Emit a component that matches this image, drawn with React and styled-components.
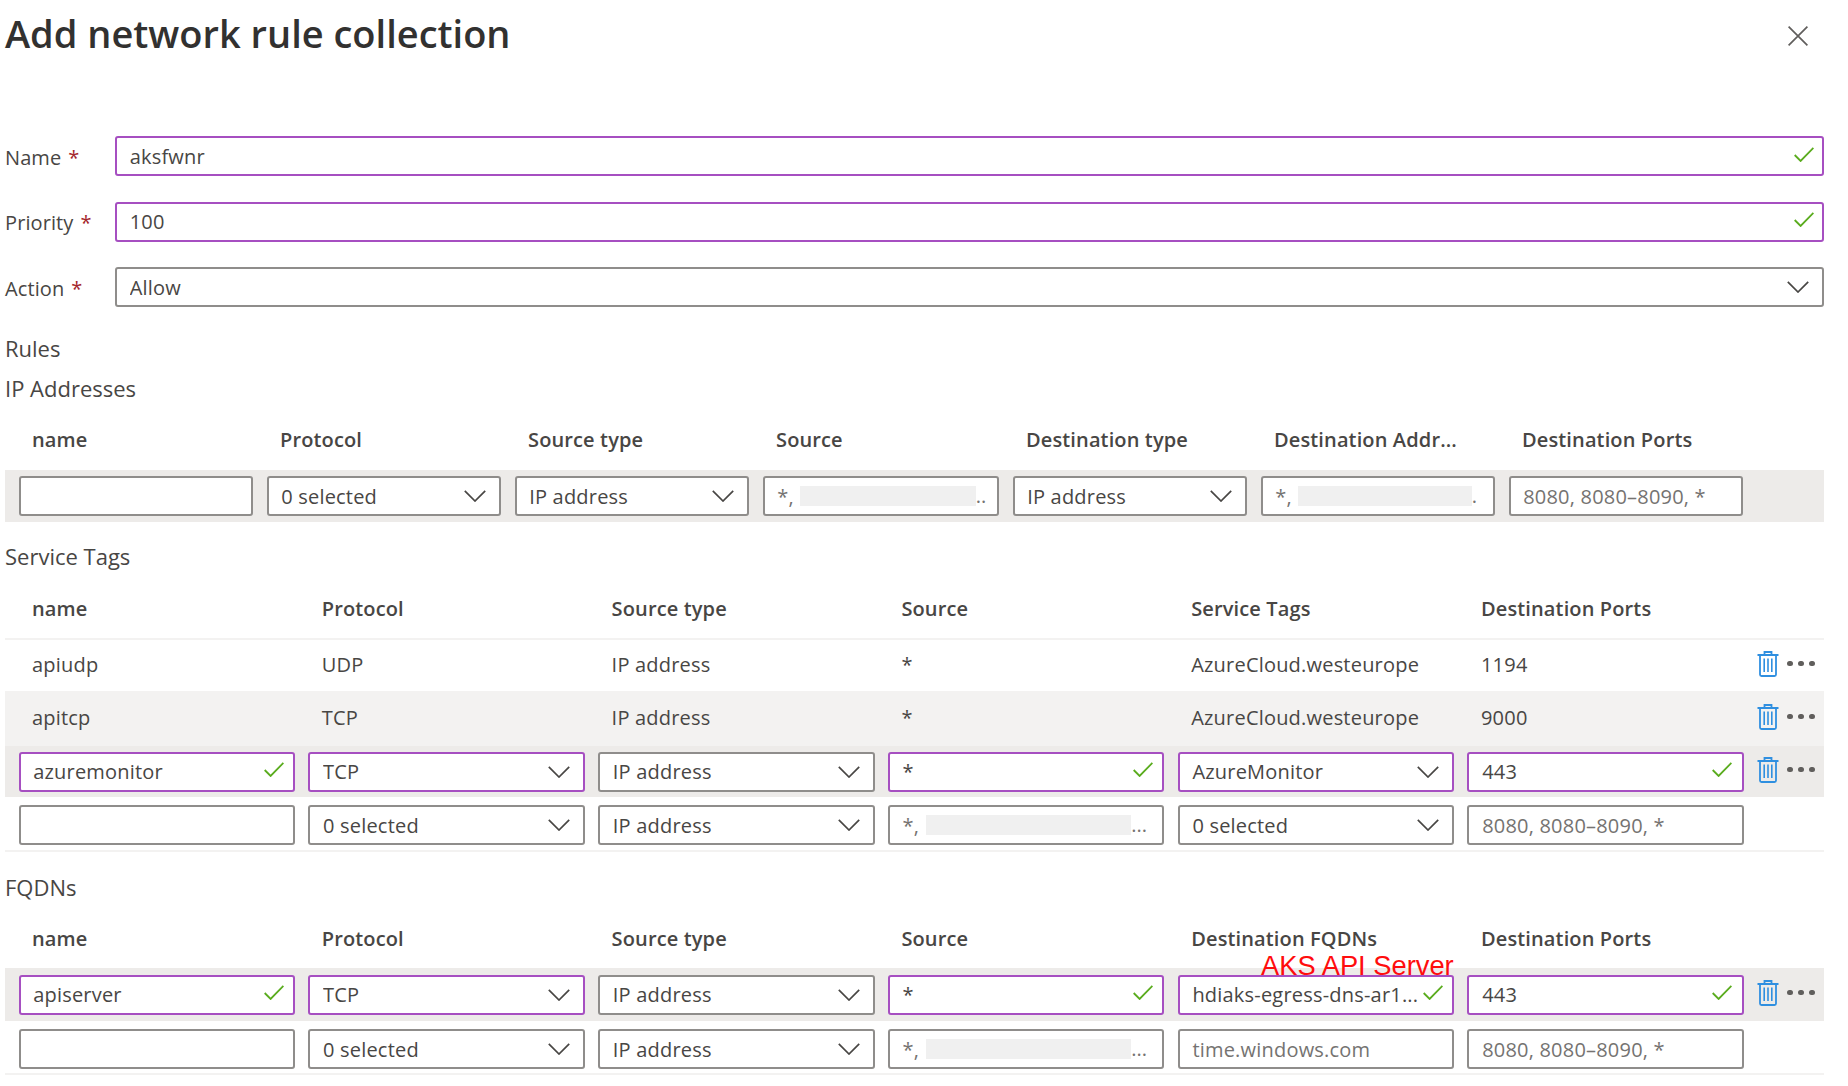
import React from "react";
import styled, { createGlobalStyle } from "styled-components";

const GlobalStyle = createGlobalStyle`
  html, body {
    margin: 0;
    padding: 0;
    background: #fff;
  }
  body {
    font-family: "Open Sans", "Noto Sans", "Liberation Sans", sans-serif;
    color: #323130;
  }
  * {
    box-sizing: border-box;
  }
`;

const Page = styled.div`
  width: 1848px;
  height: 1086px;
  padding-left: 5px;
  overflow: hidden;
`;

const TitleBar = styled.header`
  width: 1819px;
  height: 136px;
  display: flex;
  align-items: flex-start;
  justify-content: space-between;
`;

const Title = styled.h1`
  margin: 8px 0 0;
  font-size: 38px;
  line-height: 50px;
  font-weight: 600;
  letter-spacing: 0;
  color: #323130;
`;

const CloseButton = styled.button`
  margin: 26px 16px 0 0;
  padding: 0;
  width: 20px;
  height: 20px;
  border: 0;
  background: none;
  color: #605e5c;
  display: flex;
`;

const Form = styled.div`
  display: grid;
  row-gap: 25.5px;
  width: 1819px;
`;

const FormRow = styled.div`
  display: grid;
  grid-template-columns: 110px 1fr;
  align-items: center;
`;

const Label = styled.label`
  margin-top: 3px;
  font-size: 20px;
  line-height: 28px;
  letter-spacing: 0.1px;
  color: #484644;
`;

const Star = styled.span`
  color: #a4262c;
  margin-left: 7px;
`;

const Heading = styled.h2`
  margin: ${(p) => p.$top}px 0 0;
  font-size: 22px;
  line-height: 34px;
  font-weight: 400;
  letter-spacing: 0;
  color: #484644;
`;

const columnsWide = "repeat(6, 276.5px) 1fr";
const columnsIp = "234.5px 234.5px 234.5px 236.5px 234.5px 234.5px 234.5px";

const HeadRow = styled.div`
  display: grid;
  grid-template-columns: ${(p) => p.$columns};
  column-gap: ${(p) => p.$gap}px;
  align-items: center;
  width: 1819px;
  height: ${(p) => p.$height}px;
  margin-top: ${(p) => p.$top}px;
  padding-left: 13.5px;
  border-bottom: ${(p) => (p.$line ? "2px solid #f3f2f1" : "0")};
`;

const HeadCell = styled.div`
  padding-left: 13.5px;
  font-size: 20px;
  line-height: 28px;
  font-weight: 600;
  letter-spacing: 0.13px;
  color: #484644;
  white-space: nowrap;
`;

const Row = styled.div`
  display: grid;
  grid-template-columns: ${(p) => p.$columns};
  column-gap: ${(p) => p.$gap}px;
  align-items: ${(p) => (p.$last ? "start" : "center")};
  width: 1819px;
  height: ${(p) => p.$height}px;
  padding: ${(p) => (p.$last ? "8px" : "0")} 0 0 13.5px;
  background: ${(p) => p.$bg || "transparent"};
  border-bottom: ${(p) => (p.$last ? "2px solid #f3f2f1" : "0")};
  position: relative;
`;

const TextCell = styled.div`
  padding-left: 13.5px;
  margin-top: -1px;
  font-size: 20px;
  line-height: 28px;
  letter-spacing: 0.2px;
  color: #484644;
  white-space: nowrap;
`;

const Field = styled.div`
  height: 40px;
  display: flex;
  align-items: center;
  padding: 0 ${(p) => (p.$full ? "8px" : "9.5px")} 0 12.7px;
  border: 2px solid ${(p) => (p.$valid ? "#a64fc1" : "#8f8d8b")};
  border-radius: 3px;
  background: #fff;
  position: relative;
  z-index: 1;
`;

const Value = styled.span`
  flex: 1;
  min-width: 0;
  margin-top: 1px;
  font-size: 20px;
  line-height: 28px;
  letter-spacing: 0.2px;
  color: ${(p) => (p.$hint ? "#757371" : "#484644")};
  white-space: nowrap;
  overflow: hidden;
`;

const MaskPrefix = styled(Value)`
  flex: none;
`;

const Masked = styled.span`
  flex: none;
  width: ${(p) => p.$width}px;
  height: 20px;
  margin-left: ${(p) => p.$left}px;
  background: #f0f0f0;
`;

const Tail = styled.span`
  font-size: 20px;
  line-height: 28px;
  color: #757371;
  white-space: nowrap;
`;

const Actions = styled.div`
  display: flex;
  align-items: center;
  gap: 8px;
  margin-top: -4px;
`;

const Dots = styled.div`
  display: flex;
  gap: 5.5px;
  span {
    width: 5.5px;
    height: 5.5px;
    border-radius: 50%;
    background: #605e5c;
  }
`;

const Callout = styled.span`
  position: absolute;
  left: 1256px;
  top: -18px;
  font-family: "Liberation Sans", Arial, sans-serif;
  font-size: 27.3px;
  line-height: 32px;
  color: #ff0d0d;
  white-space: nowrap;
`;

const CheckIcon = styled.svg`
  flex: none;
  margin-top: -4px;
`;

const ChevronIcon = styled.svg`
  flex: none;
  margin-right: 3.5px;
`;

const TrashSvg = styled.svg`
  flex: none;
`;

const Check = () => (
  <CheckIcon width="20" height="15" viewBox="0 0 20 15" fill="none">
    <path d="M0.7 8 L6.6 14 L19.4 0.8" stroke="#5aac1e" strokeWidth="1.8" />
  </CheckIcon>
);

const Chevron = () => (
  <ChevronIcon width="22" height="12" viewBox="0 0 22 12" fill="none">
    <path d="M0.8 0.8 L11 11 L21.2 0.8" stroke="#484644" strokeWidth="1.7" />
  </ChevronIcon>
);

const CloseIcon = () => (
  <svg width="20" height="20" viewBox="0 0 20 20" fill="none">
    <path d="M0.6 0.6 L19.4 19.4 M19.4 0.6 L0.6 19.4" stroke="currentColor" strokeWidth="1.7" />
  </svg>
);

const TrashIcon = () => (
  <TrashSvg width="22" height="26" viewBox="0 0 22 26" fill="none">
    <path d="M0.5 4 H21.5 M7.5 4 V1 H14.5 V4" stroke="#2f8fe0" strokeWidth="1.8" />
    <path d="M3 4 V23.5 Q3 25 4.5 25 H17.5 Q19 25 19 23.5 V4" stroke="#2f8fe0" strokeWidth="1.8" />
    <path d="M7.2 7.5 V21 M11 7.5 V21 M14.8 7.5 V21" stroke="#2f8fe0" strokeWidth="1.6" />
  </TrashSvg>
);

const RowActions = () => (
  <Actions>
    <TrashIcon />
    <Dots>
      <span />
      <span />
      <span />
    </Dots>
  </Actions>
);

const Input = ({ value, hint, valid, full }) => (
  <Field $valid={valid} $full={full}>
    <Value $hint={hint}>{value}</Value>
    {valid && <Check />}
  </Field>
);

const Select = ({ value, valid }) => (
  <Field $valid={valid}>
    <Value>{value}</Value>
    <Chevron />
  </Field>
);

const MaskedInput = ({ width, left, tail }) => (
  <Field>
    <MaskPrefix $hint>*,</MaskPrefix>
    <Masked $width={width} $left={left} />
    <Tail>{tail}</Tail>
  </Field>
);

const wideHead = (fifth) => ["name", "Protocol", "Source type", "Source", fifth, "Destination Ports"];
const ipHead = ["name", "Protocol", "Source type", "Source", "Destination type", "Destination Addr...", "Destination Ports"];

const staticRows = [
  { name: "apiudp", protocol: "UDP", tag: "AzureCloud.westeurope", ports: "1194", height: 51 },
  { name: "apitcp", protocol: "TCP", tag: "AzureCloud.westeurope", ports: "9000", height: 55, bg: "#f3f2f1" },
];

const App = () => (
  <Page>
    <GlobalStyle />
    <TitleBar>
      <Title>Add network rule collection</Title>
      <CloseButton>
        <CloseIcon />
      </CloseButton>
    </TitleBar>

    <Form>
      <FormRow>
        <Label>Name<Star>*</Star></Label>
        <Input value="aksfwnr" valid full />
      </FormRow>
      <FormRow>
        <Label>Priority<Star>*</Star></Label>
        <Input value="100" valid full />
      </FormRow>
      <FormRow>
        <Label>Action<Star>*</Star></Label>
        <Select value="Allow" />
      </FormRow>
    </Form>

    <Heading $top={24}>Rules</Heading>
    <Heading $top={6}>IP Addresses</Heading>
    <HeadRow $columns={columnsIp} $gap={13.5} $height={60} $top={5}>
      {ipHead.map((column) => (
        <HeadCell key={column}>{column}</HeadCell>
      ))}
    </HeadRow>
    <Row $columns={columnsIp} $gap={13.5} $height={52} $bg="#edebe9">
      <Input />
      <Select value="0 selected" />
      <Select value="IP address" />
      <MaskedInput width={176} left={6} tail=".." />
      <Select value="IP address" />
      <MaskedInput width={174} left={6} tail="." />
      <Input value="8080, 8080–8090, *" hint />
    </Row>

    <Heading $top={17}>Service Tags</Heading>
    <HeadRow $columns={columnsWide} $gap={13.3} $height={60} $top={7} $line>
      {wideHead("Service Tags").map((column) => (
        <HeadCell key={column}>{column}</HeadCell>
      ))}
    </HeadRow>
    {staticRows.map((item) => (
      <Row key={item.name} $columns={columnsWide} $gap={13.3} $height={item.height} $bg={item.bg}>
        <TextCell>{item.name}</TextCell>
        <TextCell>{item.protocol}</TextCell>
        <TextCell>IP address</TextCell>
        <TextCell>*</TextCell>
        <TextCell>{item.tag}</TextCell>
        <TextCell>{item.ports}</TextCell>
        <RowActions />
      </Row>
    ))}
    <Row $columns={columnsWide} $gap={13.3} $height={51} $bg="#edebe9">
      <Input value="azuremonitor" valid />
      <Select value="TCP" valid />
      <Select value="IP address" />
      <Input value="*" valid />
      <Select value="AzureMonitor" valid />
      <Input value="443" valid />
      <RowActions />
    </Row>
    <Row $columns={columnsWide} $gap={13.3} $height={55} $last>
      <Input />
      <Select value="0 selected" />
      <Select value="IP address" />
      <MaskedInput width={205} left={7} tail="..." />
      <Select value="0 selected" />
      <Input value="8080, 8080–8090, *" hint />
    </Row>

    <Heading $top={18}>FQDNs</Heading>
    <HeadRow $columns={columnsWide} $gap={13.3} $height={58} $top={6}>
      {wideHead("Destination FQDNs").map((column) => (
        <HeadCell key={column}>{column}</HeadCell>
      ))}
    </HeadRow>
    <Row $columns={columnsWide} $gap={13.3} $height={53} $bg="#edebe9">
      <Callout>AKS API Server</Callout>
      <Input value="apiserver" valid />
      <Select value="TCP" valid />
      <Select value="IP address" />
      <Input value="*" valid />
      <Input value="hdiaks-egress-dns-ar1..." valid />
      <Input value="443" valid />
      <RowActions />
    </Row>
    <Row $columns={columnsWide} $gap={13.3} $height={54} $last>
      <Input />
      <Select value="0 selected" />
      <Select value="IP address" />
      <MaskedInput width={205} left={7} tail="..." />
      <Input value="time.windows.com" hint />
      <Input value="8080, 8080–8090, *" hint />
    </Row>
  </Page>
);

export default App;
